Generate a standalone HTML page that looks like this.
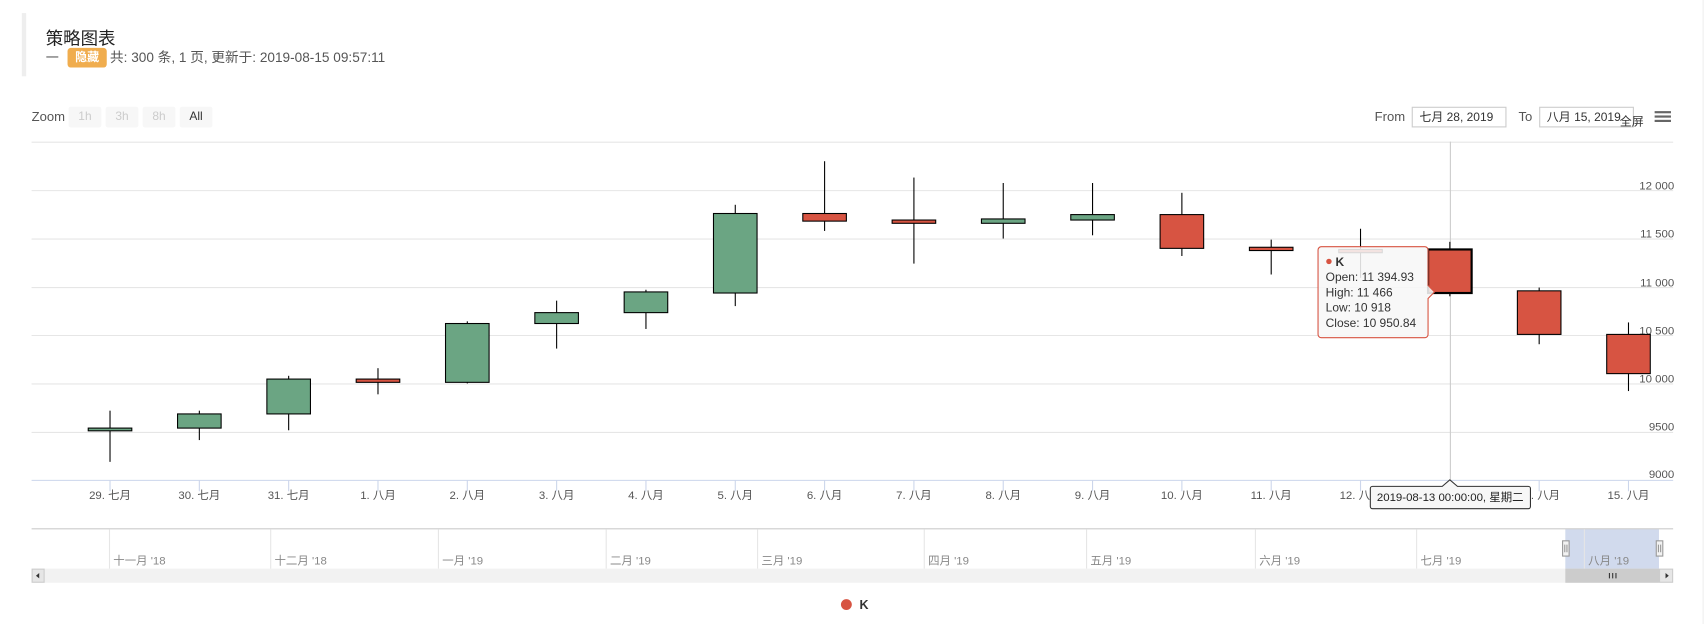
<!DOCTYPE html>
<html><head><meta charset="utf-8"><style>
html,body{margin:0;padding:0;background:#fff;width:1708px;height:624px;overflow:hidden}
#w{position:absolute;left:0;top:0;width:1568px;height:573px;transform:scale(1.08929);transform-origin:0 0;font-family:"Liberation Sans","Noto Sans CJK SC",sans-serif;color:#333}
.a{position:absolute;white-space:nowrap}
.btn{position:absolute;top:98px;height:19px;width:30px;background:#f7f7f7;border-radius:2px;font-size:11px;color:#ccc;text-align:center;line-height:19px}
.inp{position:absolute;top:98px;height:19px;border:1px solid #ccc;font-size:11px;line-height:19px;padding-left:6px;box-sizing:border-box;color:#333}
</style></head><body><div id="w">
<div class="a" style="left:20px;top:12px;width:4px;height:58px;background:#eee"></div>
<div class="a" style="left:42px;top:22px;font-size:16px;color:#222">策略图表</div>
<div class="a" style="left:42px;top:44px;font-size:12px;color:#555">一</div>
<div class="a" style="left:62px;top:44px;width:36px;height:18px;background:#f0ad4e;border-radius:3px;color:#fff;font-size:11px;font-weight:bold;text-align:center;line-height:18px">隐藏</div>
<div class="a" style="left:101px;top:44px;font-size:12.5px;color:#555;line-height:18px">共: 300 条, 1 页, 更新于: 2019-08-15 09:57:11</div>

<div class="a" style="left:29px;top:100px;font-size:12px;color:#555">Zoom</div>
<div class="btn" style="left:63px">1h</div><div class="btn" style="left:97px">3h</div><div class="btn" style="left:131px">8h</div><div class="btn" style="left:165px;color:#333">All</div>
<div class="a" style="left:1262px;top:100px;font-size:12px;color:#555">From</div>
<div class="inp" style="left:1296px;width:87px">七月 28, 2019</div>
<div class="a" style="left:1394px;top:100px;font-size:12px;color:#555">To</div>
<div class="inp" style="left:1413px;width:87px">八月 15, 2019</div>
<div class="a" style="left:1487px;top:103px;font-size:11px;color:#333">全屏</div>
<div class="a" style="left:1519px;top:102px;width:15px;height:2px;background:#666;box-shadow:0 4px 0 #666,0 8px 0 #666"></div>

<svg class="a" style="left:0;top:0" width="1568" height="573" viewBox="0 0 1568 573" font-family="Liberation Sans, Noto Sans CJK SC, sans-serif">
<line x1="1563.5" y1="0" x2="1563.5" y2="573" stroke="#eee"/>
<g stroke="#e6e6e6"><line x1="29" y1="130.5" x2="1536" y2="130.5"/><line x1="29" y1="175" x2="1536" y2="175"/><line x1="29" y1="219.5" x2="1536" y2="219.5"/><line x1="29" y1="264" x2="1536" y2="264"/><line x1="29" y1="308" x2="1536" y2="308"/><line x1="29" y1="352.5" x2="1536" y2="352.5"/><line x1="29" y1="397" x2="1536" y2="397"/></g>
<line x1="29" y1="441" x2="1536" y2="441" stroke="#ccd6eb"/>
<g font-size="10.5" fill="#555" text-anchor="end"><text x="1537" y="174">12 000</text><text x="1537" y="218">11 500</text><text x="1537" y="263">11 000</text><text x="1537" y="307">10 500</text><text x="1537" y="351">10 000</text><text x="1537" y="395">9500</text><text x="1537" y="439">9000</text></g>
<line x1="1331.5" y1="130" x2="1331.5" y2="441" stroke="#ccc"/>
<g stroke="#000" stroke-width="1">
<line x1="101" y1="377" x2="101" y2="424"/><rect x="81" y="393" width="40" height="2.5" fill="#6ba583"/>
<line x1="183" y1="377" x2="183" y2="404"/><rect x="163" y="380" width="40" height="13" fill="#6ba583"/>
<line x1="265" y1="345" x2="265" y2="395"/><rect x="245" y="348" width="40" height="32" fill="#6ba583"/>
<line x1="347" y1="338" x2="347" y2="362"/><rect x="327" y="348" width="40" height="3" fill="#d75442"/>
<line x1="429" y1="295" x2="429" y2="352"/><rect x="409" y="297" width="40" height="54" fill="#6ba583"/>
<line x1="511" y1="276" x2="511" y2="320"/><rect x="491" y="287" width="40" height="10" fill="#6ba583"/>
<line x1="593" y1="266" x2="593" y2="302"/><rect x="573" y="268" width="40" height="19" fill="#6ba583"/>
<line x1="675" y1="188" x2="675" y2="281"/><rect x="655" y="196" width="40" height="73" fill="#6ba583"/>
<line x1="757" y1="148" x2="757" y2="212"/><rect x="737" y="196" width="40" height="7" fill="#d75442"/>
<line x1="839" y1="163" x2="839" y2="242"/><rect x="819" y="202" width="40" height="3" fill="#d75442"/>
<line x1="921" y1="168" x2="921" y2="219"/><rect x="901" y="201" width="40" height="4" fill="#6ba583"/>
<line x1="1003" y1="168" x2="1003" y2="216"/><rect x="983" y="197" width="40" height="5" fill="#6ba583"/>
<line x1="1085" y1="177" x2="1085" y2="235"/><rect x="1065" y="197" width="40" height="31" fill="#d75442"/>
<line x1="1167" y1="220" x2="1167" y2="252"/><rect x="1147" y="227" width="40" height="3" fill="#d75442"/>
<line x1="1249" y1="210" x2="1249" y2="255"/><rect x="1229" y="229" width="40" height="3" fill="#d75442"/>
<line x1="1331" y1="222" x2="1331" y2="272"/><rect x="1311" y="229" width="40" height="40" fill="#d75442" stroke-width="2"/>
<line x1="1413" y1="264" x2="1413" y2="316"/><rect x="1393" y="267" width="40" height="40" fill="#d75442"/>
<line x1="1495" y1="296" x2="1495" y2="359"/><rect x="1475" y="307" width="40" height="36" fill="#d75442"/>
</g>
<g stroke="#ccd6eb"><line x1="101" y1="441" x2="101" y2="451"/><line x1="183" y1="441" x2="183" y2="451"/><line x1="265" y1="441" x2="265" y2="451"/><line x1="347" y1="441" x2="347" y2="451"/><line x1="429" y1="441" x2="429" y2="451"/><line x1="511" y1="441" x2="511" y2="451"/><line x1="593" y1="441" x2="593" y2="451"/><line x1="675" y1="441" x2="675" y2="451"/><line x1="757" y1="441" x2="757" y2="451"/><line x1="839" y1="441" x2="839" y2="451"/><line x1="921" y1="441" x2="921" y2="451"/><line x1="1003" y1="441" x2="1003" y2="451"/><line x1="1085" y1="441" x2="1085" y2="451"/><line x1="1167" y1="441" x2="1167" y2="451"/><line x1="1249" y1="441" x2="1249" y2="451"/><line x1="1331" y1="441" x2="1331" y2="451"/><line x1="1413" y1="441" x2="1413" y2="451"/><line x1="1495" y1="441" x2="1495" y2="451"/></g>
<g font-size="10.5" fill="#555" text-anchor="middle"><text x="101" y="458">29. 七月</text><text x="183" y="458">30. 七月</text><text x="265" y="458">31. 七月</text><text x="347" y="458">1. 八月</text><text x="429" y="458">2. 八月</text><text x="511" y="458">3. 八月</text><text x="593" y="458">4. 八月</text><text x="675" y="458">5. 八月</text><text x="757" y="458">6. 八月</text><text x="839" y="458">7. 八月</text><text x="921" y="458">8. 八月</text><text x="1003" y="458">9. 八月</text><text x="1085" y="458">10. 八月</text><text x="1167" y="458">11. 八月</text><text x="1249" y="458">12. 八月</text><text x="1413" y="458">14. 八月</text><text x="1495" y="458">15. 八月</text></g>
<!-- tooltip -->
<path d="M1213 226.5 H1308 a3 3 0 0 1 3 3 V262 l6 6 l-6 6 V307 a3 3 0 0 1 -3 3 H1213 a3 3 0 0 1 -3 -3 V229.5 a3 3 0 0 1 3 -3Z" fill="rgba(247,247,247,0.88)" stroke="#d75442"/>
<circle cx="1220" cy="240" r="2.5" fill="#d75442"/>
<text x="1226" y="244" font-size="11" font-weight="bold" fill="#333">K</text>
<g font-size="11" fill="#333"><text x="1217" y="258">Open: 11 394.93</text><text x="1217" y="272">High: 11 466</text><text x="1217" y="286">Low: 10 918</text><text x="1217" y="300">Close: 10 950.84</text></g>
<path d="M1260 446.5 H1324 l7 -6 l7 6 H1403 a2 2 0 0 1 2 2 V465 a2 2 0 0 1 -2 2 H1260 a2 2 0 0 1 -2 -2 V448.5 a2 2 0 0 1 2 -2Z" fill="#f7f7f7" stroke="#333"/>
<text x="1264" y="460" font-size="10.5" fill="#222">2019-08-13 00:00:00, 星期二</text>
<!-- navigator -->
<line x1="29" y1="485.5" x2="1536" y2="485.5" stroke="#ccc"/>
<rect x="1437" y="486" width="86" height="36" fill="rgba(102,133,194,0.3)"/>
<g stroke="#e6e6e6"><line x1="100.5" y1="486" x2="100.5" y2="522"/><line x1="248.5" y1="486" x2="248.5" y2="522"/><line x1="402.5" y1="486" x2="402.5" y2="522"/><line x1="556.5" y1="486" x2="556.5" y2="522"/><line x1="695.5" y1="486" x2="695.5" y2="522"/><line x1="848.5" y1="486" x2="848.5" y2="522"/><line x1="997.5" y1="486" x2="997.5" y2="522"/><line x1="1152.5" y1="486" x2="1152.5" y2="522"/><line x1="1300.5" y1="486" x2="1300.5" y2="522"/><line x1="1454.5" y1="486" x2="1454.5" y2="522"/></g>
<g font-size="10.5" fill="#888"><text x="104" y="518">十一月 '18</text><text x="252" y="518">十二月 '18</text><text x="406" y="518">一月 '19</text><text x="560" y="518">二月 '19</text><text x="699" y="518">三月 '19</text><text x="852" y="518">四月 '19</text><text x="1001" y="518">五月 '19</text><text x="1156" y="518">六月 '19</text><text x="1304" y="518">七月 '19</text><text x="1458" y="518">八月 '19</text></g>
<rect x="29" y="522" width="1507" height="13" fill="#f2f2f2"/>
<rect x="1437" y="522" width="86" height="13" fill="#ccc"/>
<g stroke="#333"><line x1="1477.5" y1="526" x2="1477.5" y2="531"/><line x1="1480.5" y1="526" x2="1480.5" y2="531"/><line x1="1483.5" y1="526" x2="1483.5" y2="531"/></g>
<rect x="29.5" y="522.5" width="11" height="12" fill="#e6e6e6" stroke="#ccc"/><path d="M33 528.5 l3 -2.5 v5z" fill="#333"/>
<rect x="1523.5" y="522.5" width="12" height="12" fill="#e6e6e6" stroke="#ccc"/><path d="M1532 528.5 l-3 -2.5 v5z" fill="#333"/>
<rect x="1434.5" y="496.5" width="6" height="14" fill="#f2f2f2" stroke="#999"/><line x1="1436.5" y1="500" x2="1436.5" y2="507" stroke="#999"/><line x1="1438.5" y1="500" x2="1438.5" y2="507" stroke="#999"/>
<rect x="1520.5" y="496.5" width="6" height="14" fill="#f2f2f2" stroke="#999"/><line x1="1522.5" y1="500" x2="1522.5" y2="507" stroke="#999"/><line x1="1524.5" y1="500" x2="1524.5" y2="507" stroke="#999"/>
<circle cx="777" cy="555" r="5" fill="#d75442"/>
<text x="789" y="559" font-size="11.5" font-weight="bold" fill="#333">K</text>
</svg>
</div></body></html>
